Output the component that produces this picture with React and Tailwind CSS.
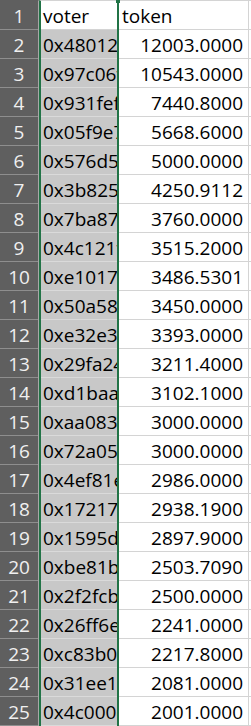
import React from 'react';

const rows = [
  ['0x48012ab3', '12003.0000'],
  ['0x97c06f1d', '10543.0000'],
  ['0x931fef20', '7440.8000'],
  ['0x05f9e7c1', '5668.6000'],
  ['0x576d5a09', '5000.0000'],
  ['0x3b8257de', '4250.9112'],
  ['0x7ba8731c', '3760.0000'],
  ['0x4c121f0a', '3515.2000'],
  ['0xe10177bb', '3486.5301'],
  ['0x50a5862e', '3450.0000'],
  ['0xe32e3c44', '3393.0000'],
  ['0x29fa24d1', '3211.4000'],
  ['0xd1baa0f3', '3102.1000'],
  ['0xaa0839e5', '3000.0000'],
  ['0x72a05b17', '3000.0000'],
  ['0x4ef81e60', '2986.0000'],
  ['0x17217c8d', '2938.1900'],
  ['0x1595d2aa', '2897.9000'],
  ['0xbe81b4f9', '2503.7090'],
  ['0x2f2fcb06', '2500.0000'],
  ['0x26ff6e35', '2241.0000'],
  ['0xc83b0d72', '2217.8000'],
  ['0x31ee1a8c', '2081.0000'],
  ['0x4c000e91', '2001.0000'],
];

const cell = 'h-[29px] border-b flex items-end pb-[3px] overflow-hidden whitespace-nowrap';

export default function App() {
  return (
    <div className="relative w-[251px] h-[726px] overflow-hidden bg-white flex text-[19px] leading-none font-['Open_Sans',sans-serif] text-black">
      {/* row numbers */}
      <div className="w-[39px] shrink-0 bg-[#5f5f5f] border-r border-[#a8a8a8] border-t border-t-[#5f5f5f]">
        {Array.from({ length: 25 }, (_, i) => (
          <div key={i} className={`${cell} justify-center border-[#8e8e8e] text-[#f0f0f0]`}>
            {i + 1}
          </div>
        ))}
      </div>

      {/* column A: selected */}
      <div className="w-[80px] shrink-0 border-x-2 border-[#217346] bg-[#c8c8c8] border-t border-t-[#d4d4d4]">
        <div className={`${cell} bg-white border-[#d4d4d4] pl-[2px]`}>voter</div>
        {rows.map(([voter], i) => (
          <div key={i} className={`${cell} border-[#dadada] pl-[2px]`}>
            {voter}
          </div>
        ))}
      </div>

      {/* column B */}
      <div className="w-[130px] shrink-0 border-r border-[#d4d4d4] border-t border-t-[#d4d4d4]">
        <div className={`${cell} border-[#d4d4d4] pl-[3px]`}>token</div>
        {rows.map(([, token], i) => (
          <div key={i} className={`${cell} justify-end border-[#d4d4d4] pr-[5px]`}>
            {token}
          </div>
        ))}
      </div>

      {/* column C edge */}
      <div className="flex-1 border-t border-[#d4d4d4]">
        {Array.from({ length: 25 }, (_, i) => (
          <div key={i} className="h-[29px] border-b border-[#d4d4d4]" />
        ))}
      </div>

      {/* selection handle at top of column A border */}
      <div className="absolute left-[116px] top-0 w-[4px] h-[3px] bg-[#217346]" />
    </div>
  );
}
